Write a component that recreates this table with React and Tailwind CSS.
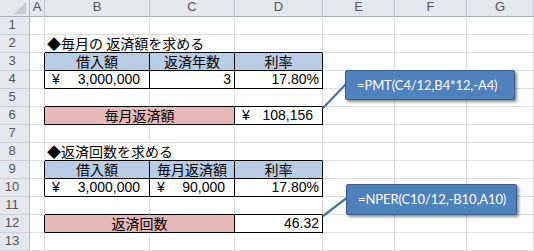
import React from 'react';

const JP = "font-['Noto_Sans_CJK_JP',sans-serif]";
const NUM = "font-['Liberation_Sans','Noto_Sans_CJK_JP',sans-serif]";

// One worksheet cell. Borders are drawn on the right/bottom edge of each cell.
function C({ span2, fill, r, b, kind, jp, children }) {
  const cls = [
    'flex items-end pb-[1px] border-r border-b leading-[16px] whitespace-nowrap text-[14px] text-black',
    jp ? JP : NUM,
    span2 ? 'col-span-2' : '',
    fill === 'blue' ? 'bg-[#b8cce4]' : fill === 'pink' ? 'bg-[#e6b9b8]' : 'bg-white',
    r ? 'border-r-black' : 'border-r-[#dadcdd]',
    b ? 'border-b-black' : 'border-b-[#dadcdd]',
    kind === 'center'
      ? 'justify-center'
      : kind === 'right'
      ? 'justify-end pr-[3px]'
      : kind === 'yen'
      ? 'justify-between pl-[7px] pr-[9px]'
      : 'pl-[2px]',
  ].join(' ');
  return <div className={cls}>{children}</div>;
}

function RowHead({ n }) {
  return (
    <div className="flex items-end justify-center pr-[5px] pb-[1px] leading-[16px] bg-[#e4e7eb] border-r border-b border-r-[#b3b9c0] border-b-[#cdd1d6] text-[13px] text-[#555] font-['Liberation_Sans',sans-serif]">
      {n}
    </div>
  );
}

function ColHead({ children }) {
  return (
    <div className="flex items-end justify-center pb-[1px] leading-[16px] bg-[#e4e7eb] border-r border-b border-r-[#c3c8ce] border-b-[#a9b0b8] text-[13px] text-[#555] font-['Liberation_Sans',sans-serif]">
      {children}
    </div>
  );
}

function Corner() {
  return (
    <div className="relative bg-[#e4e7eb] border-r border-b border-r-[#b3b9c0] border-b-[#a9b0b8]">
      <svg className="absolute right-[3px] bottom-[2px]" width="12" height="12" viewBox="0 0 12 12">
        <polygon points="12,0 12,12 0,12" fill="#c8ccd1" />
      </svg>
    </div>
  );
}

function Yen({ v }) {
  return (
    <>
      <span>¥</span>
      <span>{v}</span>
    </>
  );
}

function PlainRow({ n }) {
  return (
    <>
      <RowHead n={n} />
      <C />
      <C />
      <C />
      <C />
      <C />
      <C />
      <C />
    </>
  );
}

function Callout({ pos, children }) {
  return (
    <div
      className={`absolute ${pos} flex items-center pl-[11px] bg-[#4f81bd] border-[1.5px] border-[#385d8a] rounded-[2px] shadow-[2px_2px_3px_rgba(0,0,0,0.45)] text-white text-[13px] tracking-[-0.1px] leading-none font-['Lato',sans-serif] whitespace-nowrap`}
    >
      {children}
    </div>
  );
}

export default function App() {
  return (
    <div className="relative w-[534px] h-[251px] overflow-hidden bg-white">
      <div className="grid grid-cols-[30px_15px_105px_85px_88px_72px_72px_67px] grid-rows-[17px_repeat(13,18px)]">
        {/* column headings */}
        <Corner />
        {['A', 'B', 'C', 'D', 'E', 'F', 'G'].map((l) => (
          <ColHead key={l}>{l}</ColHead>
        ))}

        <PlainRow n={1} />

        {/* row 2 */}
        <RowHead n={2} />
        <C />
        <C span2 b jp>◆毎月の 返済額を求める</C>
        <C b />
        <C />
        <C />
        <C />

        {/* row 3 */}
        <RowHead n={3} />
        <C r />
        <C fill="blue" r b jp kind="center">借入額</C>
        <C fill="blue" r b jp kind="center">返済年数</C>
        <C fill="blue" r b jp kind="center">利率</C>
        <C />
        <C />
        <C />

        {/* row 4 */}
        <RowHead n={4} />
        <C r />
        <C r b kind="yen"><Yen v="3,000,000" /></C>
        <C r b kind="right">3</C>
        <C r b kind="right">17.80%</C>
        <C />
        <C />
        <C />

        {/* row 5 */}
        <RowHead n={5} />
        <C />
        <C b />
        <C b />
        <C b />
        <C />
        <C />
        <C />

        {/* row 6 */}
        <RowHead n={6} />
        <C r />
        <C span2 fill="pink" r b jp kind="center">毎月返済額</C>
        <C r b kind="yen"><Yen v="108,156" /></C>
        <C />
        <C />
        <C />

        <PlainRow n={7} />

        {/* row 8 */}
        <RowHead n={8} />
        <C />
        <C span2 b jp>◆返済回数を求める</C>
        <C b />
        <C />
        <C />
        <C />

        {/* row 9 */}
        <RowHead n={9} />
        <C r />
        <C fill="blue" r b jp kind="center">借入額</C>
        <C fill="blue" r b jp kind="center">毎月返済額</C>
        <C fill="blue" r b jp kind="center">利率</C>
        <C />
        <C />
        <C />

        {/* row 10 */}
        <RowHead n={10} />
        <C r />
        <C r b kind="yen"><Yen v="3,000,000" /></C>
        <C r b kind="yen"><Yen v="90,000" /></C>
        <C r b kind="right">17.80%</C>
        <C />
        <C />
        <C />

        {/* row 11 */}
        <RowHead n={11} />
        <C />
        <C b />
        <C b />
        <C b />
        <C />
        <C />
        <C />

        {/* row 12 */}
        <RowHead n={12} />
        <C r />
        <C span2 fill="pink" r b jp kind="center">返済回数</C>
        <C r b kind="right">46.32</C>
        <C />
        <C />
        <C />

        <PlainRow n={13} />
      </div>

      {/* connector lines from the formula notes to their cells */}
      <svg className="absolute left-0 top-0 pointer-events-none" width="534" height="251">
        <line x1="347" y1="83" x2="323" y2="108" stroke="#4a72a3" strokeWidth="2.2" />
        <line x1="348" y1="197" x2="323" y2="216" stroke="#4a72a3" strokeWidth="2.2" />
      </svg>

      <Callout pos="left-[345px] top-[70px] w-[170px] h-[30px]">=PMT(C4/12,B4*12,-A4)</Callout>
      <Callout pos="left-[346px] top-[184px] w-[171px] h-[31px]">=NPER(C10/12,-B10,A10)</Callout>
    </div>
  );
}
